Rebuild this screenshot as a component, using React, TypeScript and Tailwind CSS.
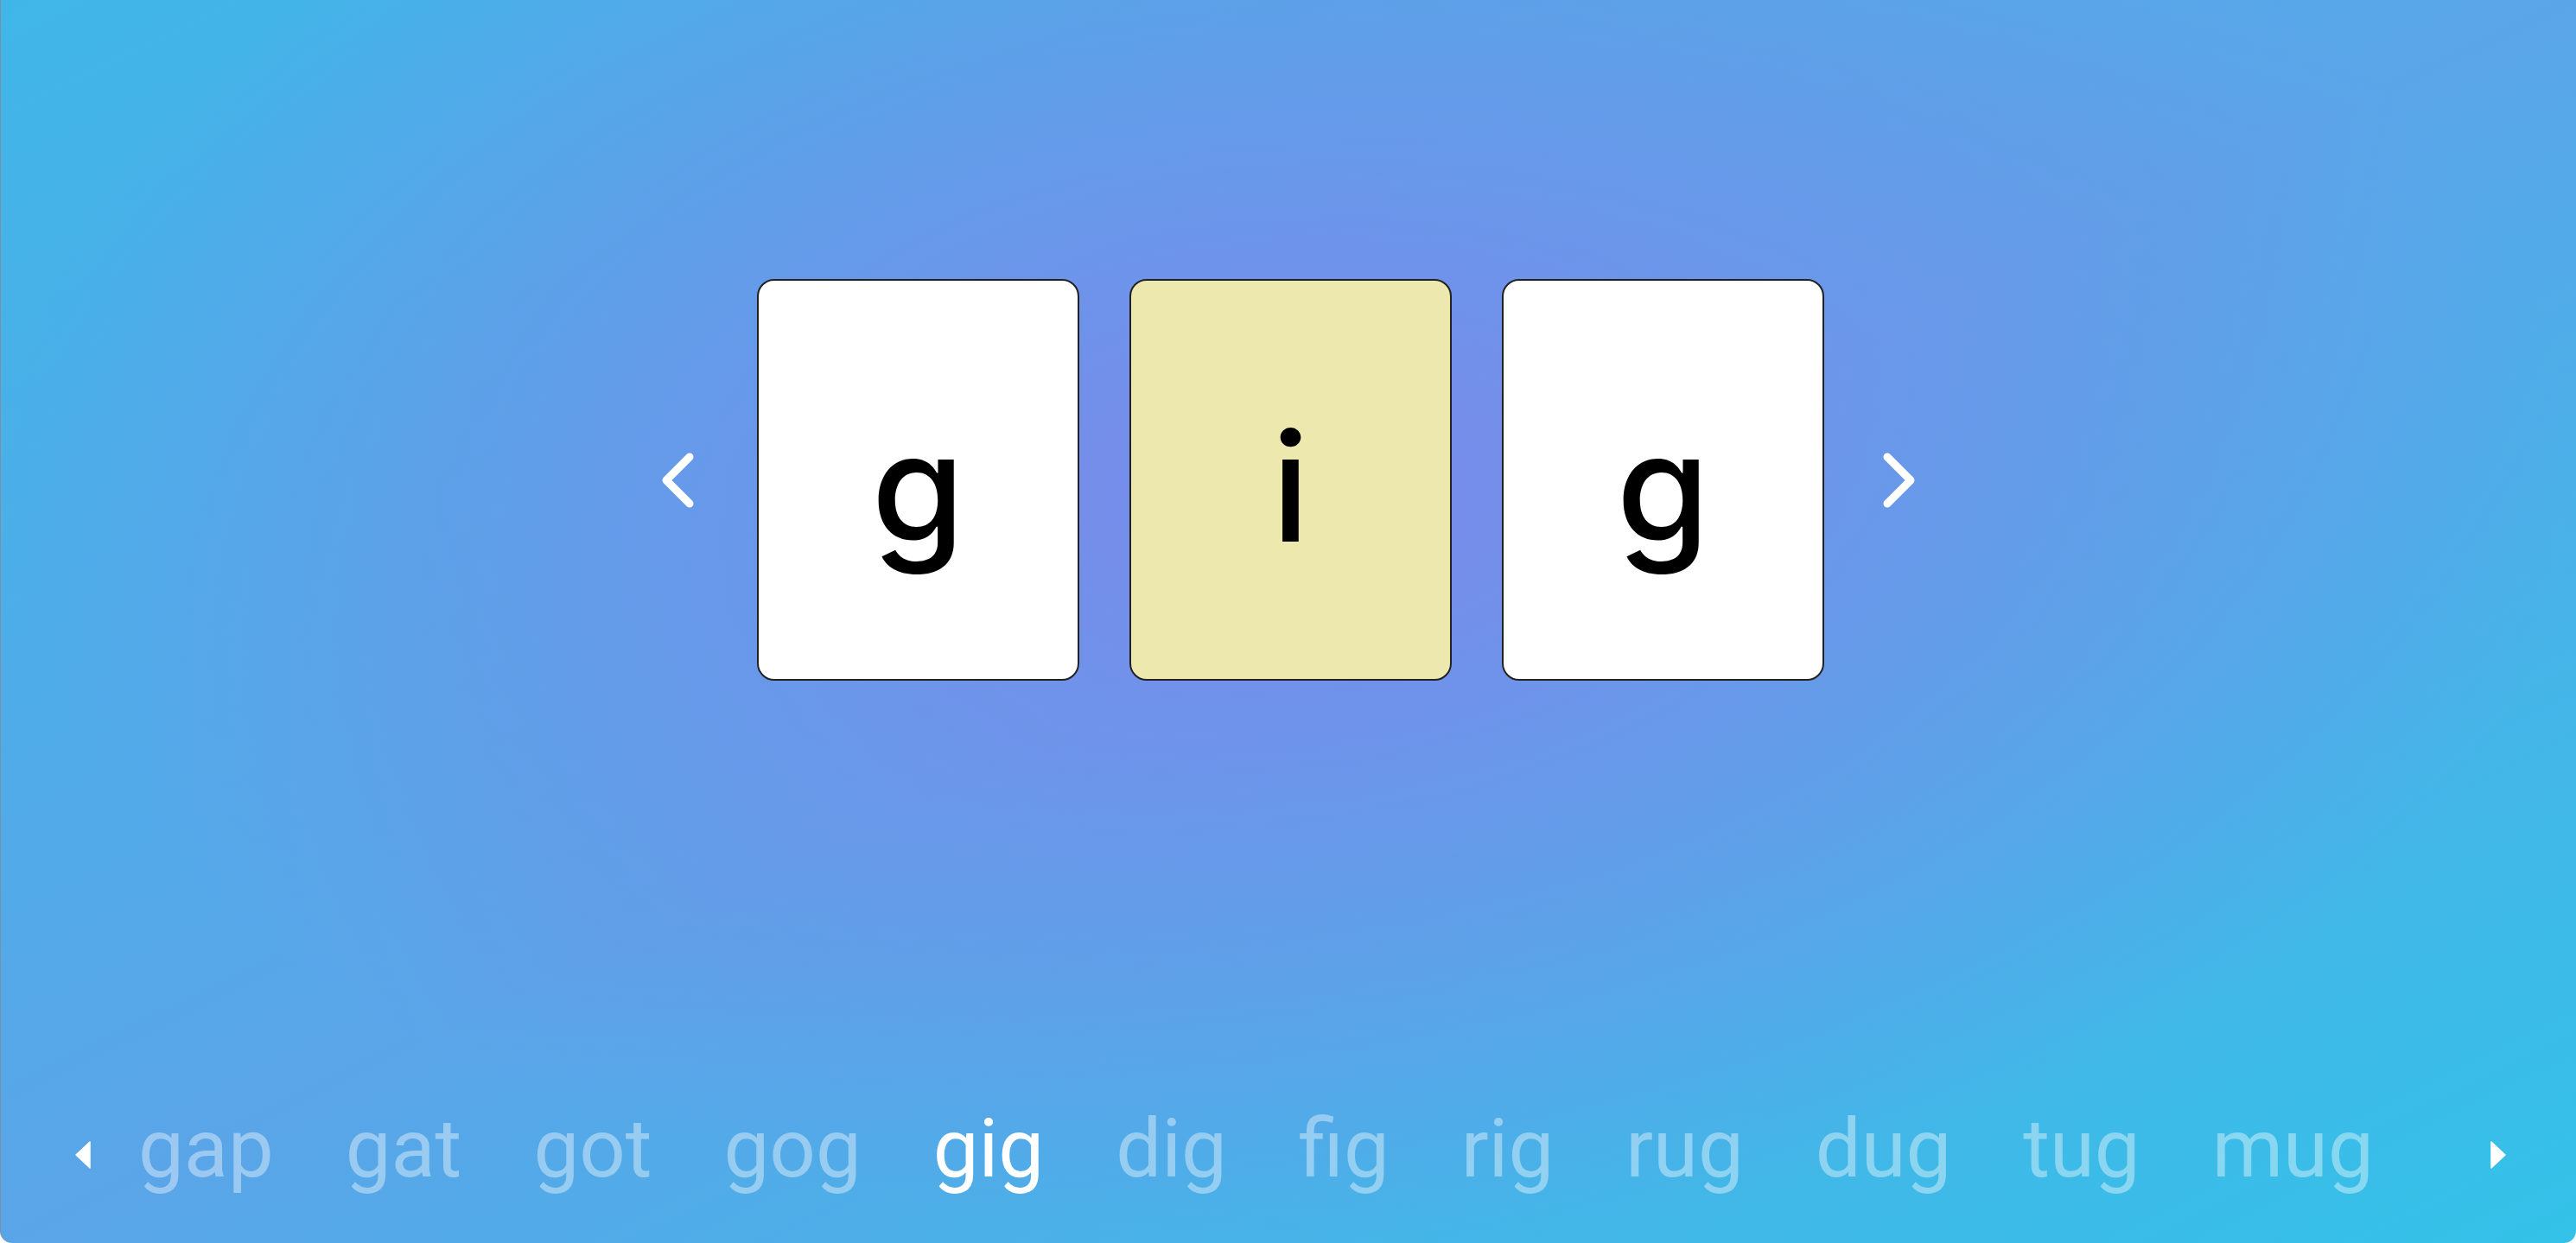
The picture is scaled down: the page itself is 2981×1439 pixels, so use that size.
import React from 'react';

const letters = [
  { ch: 'g', active: false },
  { ch: 'i', active: true },
  { ch: 'g', active: false },
];

const words = ['gap', 'gat', 'got', 'gog', 'gig', 'dig', 'fig', 'rig', 'rug', 'dug', 'tug', 'mug'];
const current = 'gig';

function Chevron({ dir }: { dir: 'left' | 'right' }) {
  return (
    <svg width="44" height="68" viewBox="0 0 44 68" fill="none" className="shrink-0">
      <polyline
        points={dir === 'left' ? '35,7 8,34 35,61' : '9,7 36,34 9,61'}
        stroke="white"
        strokeWidth="9"
        strokeLinecap="round"
        strokeLinejoin="round"
      />
    </svg>
  );
}

function Caret({ dir }: { dir: 'left' | 'right' }) {
  return (
    <svg width="18" height="32" viewBox="0 0 18 32" className="shrink-0 mt-[14px]">
      <polygon points={dir === 'left' ? '17,1 1,16 17,31' : '1,1 17,16 1,31'} fill="white" strokeLinejoin="round" stroke="white" strokeWidth="1.5" />
    </svg>
  );
}

export default function App() {
  return (
    <div className="w-full h-[1439px] bg-white">
      <div className="relative w-full h-full flex flex-col overflow-hidden rounded-b-[14px] border-l border-[#7d8ea3] bg-[radial-gradient(ellipse_farthest-side_at_50%_39%,rgba(125,135,235,0.92)_0%,rgba(125,135,235,0)_100%),linear-gradient(to_bottom_right,#40b6e8_0%,#5aa5e8_50%,#33c2e8_100%)]">
        {/* Letter cards */}
        <div className="pt-[323px] flex items-center justify-center">
          <Chevron dir="left" />
          <div className="ml-[69px] mr-[64px] flex gap-[58px]">
            {letters.map((l, i) => (
              <div
                key={i}
                className={`w-[373px] h-[465px] rounded-[20px] border-2 border-[#222] flex items-center justify-center ${
                  l.active ? 'bg-[#ede8ae]' : 'bg-white'
                }`}
              >
                <span className="text-[174px] leading-none font-medium text-black font-['Inter',sans-serif] translate-y-[8px]">
                  {l.ch}
                </span>
              </div>
            ))}
          </div>
          <Chevron dir="right" />
        </div>

        {/* Word strip */}
        <div className="mt-auto pb-[62px] pl-[86px] pr-[81px] flex items-center">
          <Caret dir="left" />
          <div className="ml-[55px] flex gap-[83px]">
            {words.map((w) => (
              <span
                key={w}
                className={`text-[94px] leading-none font-['Roboto',sans-serif] ${
                  w === current ? 'text-white' : 'text-white/40'
                }`}
              >
                {w}
              </span>
            ))}
          </div>
          <div className="ml-auto">
            <Caret dir="right" />
          </div>
        </div>
      </div>
    </div>
  );
}
